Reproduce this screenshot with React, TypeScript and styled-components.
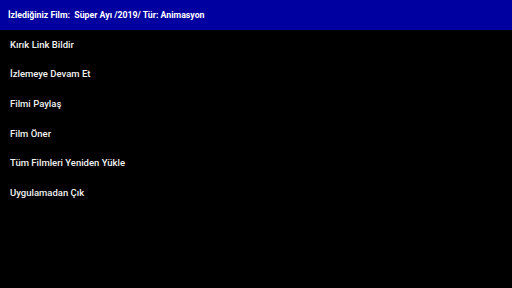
import React from 'react';
import styled, { createGlobalStyle } from 'styled-components';

const GlobalStyle = createGlobalStyle`
  html, body {
    margin: 0;
    padding: 0;
    background: #000;
  }
  body {
    font-family: Roboto, "Noto Sans", sans-serif;
  }
`;

const Screen = styled.div`
  width: 512px;
  height: 288px;
  background: #000;
  display: flex;
  flex-direction: column;
  overflow: hidden;
`;

const Header = styled.div`
  height: 29.6px;
  background: #0000a0;
  display: flex;
  align-items: center;
  padding-left: 8px;
  color: #fff;
  font-size: 8.75px;
  font-weight: 700;
  white-space: pre;
`;

const Menu = styled.div`
  display: flex;
  flex-direction: column;
`;

const MenuItem = styled.div`
  height: 29.6px;
  display: flex;
  align-items: center;
  padding-left: 10px;
  color: #f2f2f2;
  font-size: 9.5px;
  font-weight: 500;
  cursor: pointer;
`;

const items = [
  'Kırık Link Bildir',
  'İzlemeye Devam Et',
  'Filmi Paylaş',
  'Film Öner',
  'Tüm Filmleri Yeniden Yükle',
  'Uygulamadan Çık',
];

const App = () => {
  return (
    <>
      <GlobalStyle />
      <Screen>
        <Header>{'İzlediğiniz Film:  Süper Ayı /2019/ Tür: Animasyon'}</Header>
        <Menu>
          {items.map((item) => (
            <MenuItem key={item}>{item}</MenuItem>
          ))}
        </Menu>
      </Screen>
    </>
  );
};

export default App;
